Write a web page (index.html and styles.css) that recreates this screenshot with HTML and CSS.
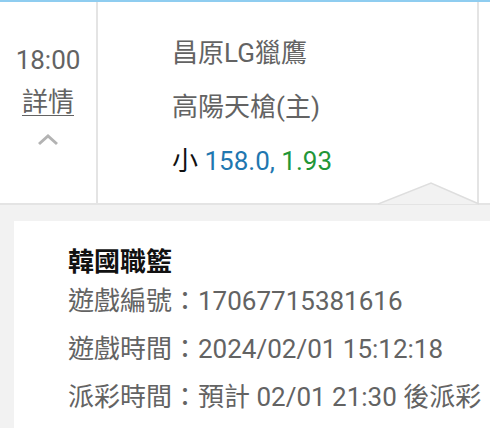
FILE: index.html
```html
<!DOCTYPE html>
<html lang="zh-Hant">
<head>
<meta charset="utf-8">
<title>注單詳情</title>
<link rel="stylesheet" href="styles.css">
</head>
<body>

<div class="match_row">
	<div class="time_col">
		<div class="match_time">18:00</div>
		<a class="detail_link">詳情</a>
		<svg class="chevron" width="22" height="13" viewBox="0 0 22 13"><path d="M2 11 L11 3 L20 11" fill="none" stroke="#b3b3b3" stroke-width="3"/></svg>
	</div>
	<div class="teams_col">
		<div class="team">昌原LG獵鷹</div>
		<div class="team">高陽天槍(主)</div>
		<div class="bet"><span class="bet_pick">小</span> <span class="bet_line">158.0,</span> <span class="bet_odds">1.93</span></div>
	</div>
	<div class="side_col"></div>

	<!-- the little notch pointing up into the row -->
	<svg class="notch" width="102" height="23" viewBox="0 0 102 23"><polyline points="0,22 53,1 101,22" fill="#f2f2f2" stroke="#dedede" stroke-width="1.5"/></svg>
</div>

<div class="detail_panel">
	<div class="detail_card">
		<div class="league">韓國職籃</div>
		<div class="detail_line">遊戲編號：17067715381616</div>
		<div class="detail_line">遊戲時間：2024/02/01 15:12:18</div>
		<div class="detail_line">派彩時間：預計 02/01 21:30 後派彩</div>
	</div>
</div>

</body>
</html>
```

FILE: styles.css
```css
html, body {
margin: 0;
padding: 0;
background: #f2f2f2;
}

body {
font: 26px Roboto, "Noto Sans CJK TC", sans-serif;
color: #636363;
width: 490px;
height: 428px;
overflow: hidden;
}


/* match row */


.match_row {
position: relative;
display: flex;
height: 201px;
background: #ffffff;
border-top: 2px solid #8fcdf0;
border-bottom: 2px solid #e4e4e4;
}

.time_col {
width: 96px;
border-right: 2px solid #e4e4e4;
display: flex;
flex-direction: column;
align-items: center;
padding-top: 43px;
}

.match_time {
line-height: 30px;
}

.detail_link {
margin-top: 12px;
line-height: 30px;
text-decoration: underline;
text-underline-offset: 4px;
text-decoration-thickness: 1px;
}

.chevron {
margin-top: 16px;
}

.teams_col {
flex: 1;
padding-left: 74px;
padding-top: 24px;
}

.team, .bet {
line-height: 54px;
}

.bet_pick {
color: #111111;
}

.bet_line {
color: #1f77b0;
}

.bet_odds {
color: #229637;
}

.side_col {
width: 11px;
border-left: 2px solid #e4e4e4;
}

/* sits over the bottom border of the row */
.notch {
position: absolute;
left: 378px;
bottom: -2px;
}


/* detail panel */


.detail_panel {
padding: 16px 0 0 14px;
}

.detail_card {
background: #ffffff;
padding: 26px 0 10px 54px;
}

.league {
font-weight: bold;
color: #111111;
line-height: 30px;
}

.detail_line {
line-height: 48px;
}
```
